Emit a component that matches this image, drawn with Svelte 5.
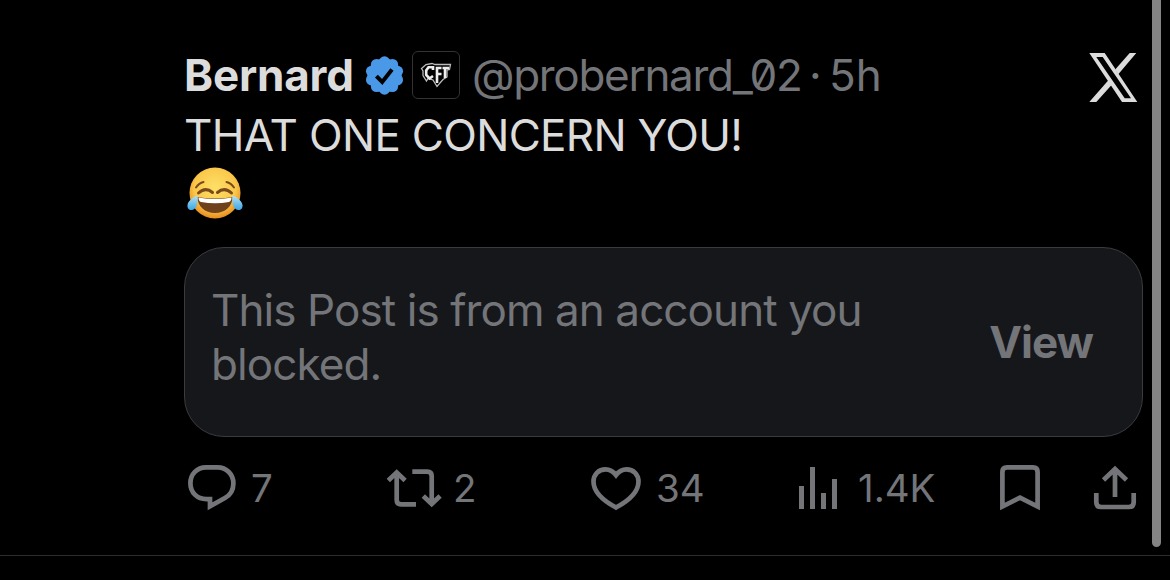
<script lang="ts">
	const post = {
		name: 'Bernard',
		handle: '@probernard_02',
		age: '5h',
		text: 'THAT ONE CONCERN YOU!'
	};

	const notice = ['This Post is from an account you', 'blocked.'];
	const counts = { replies: '7', reposts: '2', likes: '34', views: '1.4K' };

	const bars = [
		{ x: 0, y: 19 },
		{ x: 11, y: 0 },
		{ x: 22, y: 26 },
		{ x: 33, y: 12 }
	];

	// the verified seal is a disc with ten lobes round its rim
	const lobes = Array.from({ length: 10 }, (_, i) => {
		const angle = ((i * 36 - 90) * Math.PI) / 180;
		return { x: 19.5 + 13.6 * Math.cos(angle), y: 19.5 + 13.6 * Math.sin(angle) };
	});
</script>

<main>
	<article>
		<header>
			<span class="name">{post.name}</span>
			<svg class="verified" viewBox="0 0 39 39" aria-label="Verified">
				<circle cx="19.5" cy="19.5" r="17" />
				{#each lobes as lobe}
					<circle cx={lobe.x} cy={lobe.y} r="5.6" />
				{/each}
				<path d="M11.4 20.2l5.8 5.8 9.8-12.6" />
			</svg>
			<span class="affiliate">
				<svg viewBox="0 0 32 26" aria-label="CFT">
					<path
						class="crest"
						d="M1.5 6.5L6 2.5 12 1.5l3 1H30.5l-1 5-2.5.5v7l-4 2.5-6 7-4-6.5-5-1.5-1.5 2.500L3 13.500V9z"
					/>
					<path class="letters" d="M13 8V5.300L8.500 5.200 6.200 8.500v4.500l3.300 3.500 3.500-2.500M17 21V6h4.500M17 12h4.500M22.500 6h6.500M25 6v10" />
				</svg>
			</span>
			<span class="handle">{post.handle}</span>
			<span class="dot">·</span>
			<span class="age">{post.age}</span>
			<svg class="logo" viewBox="0 0 49 49" aria-label="X">
				<path
					fill-rule="evenodd"
					d="M.3 0H15.700L48.300 49H33zM7.300 4L35.700 45.200H42L13.700 4z"
				/>
				<path d="M40.700 0H47.300L29.300 21.200 26.200 16.600zM.3 49H7.300L22.800 31.800 19.600 27z" />
			</svg>
		</header>

		<p class="text">{post.text}</p>

		<svg class="joy" viewBox="0 0 56 52" aria-label="Face with tears of joy">
			<defs>
				<radialGradient id="skin" cx="0.5" cy="0.4" r="0.62">
					<stop offset="0" stop-color="#fde068" />
					<stop offset="0.65" stop-color="#fac84a" />
					<stop offset="1" stop-color="#e5861c" />
				</radialGradient>
				<linearGradient id="tear" x1="0" y1="0" x2="0" y2="1">
					<stop offset="0" stop-color="#b5e2f2" />
					<stop offset="1" stop-color="#3ba6e6" />
				</linearGradient>
			</defs>
			<circle cx="28" cy="26" r="25.5" fill="url(#skin)" />
			<path class="brow" d="M9 20.500q3-4.500 7.500-5.500M47 20.500q-3-4.500-7.500-5.500" />
			<path class="eye" d="M11.500 26q7-6.500 14-.5M44.500 26q-7-6.500-14-.5" />
			<path d="M10.500 30q17.500 3 35 0c0 9.500-7.500 16-17.500 16S10.500 39.500 10.500 30z" fill="#6f421c" />
			<path d="M11.500 30.500q16.500 3 33 0c0 2.500-1 4-2.500 4.500q-14 2.500-28 0C12.500 34.500 11.500 33 11.500 30.500z" fill="#fff" />
			<path d="M10.500 28.500C6 30 1 34 .5 38c-.5 3.500 2 5.500 4.500 5 5-1 6-7 5.500-14.500z" fill="url(#tear)" />
			<path d="M45.500 28.500C50 30 55 34 55.500 38c.5 3.500-2 5.500-4.500 5-5-1-6-7-5.500-14.500z" fill="url(#tear)" />
		</svg>

		<section class="quote">
			<p>
				{#each notice as line}
					<span>{line}</span>
				{/each}
			</p>
			<button>View</button>
		</section>

		<footer>
			<div class="action">
				<svg width="48" height="46" viewBox="0 0 48 46">
					<path
						d="M22 41.300V34.200H18.500C9 34.200 2.400 27.500 2.400 18.300S9 2.400 18 2.400h11.500c9 0 15.900 7 15.900 16 0 6.300-3 11.500-8.500 14.600z"
					/>
				</svg>
				<span class="replies">{counts.replies}</span>
			</div>
			<div class="action">
				<svg width="56" height="46" viewBox="0 0 56 46">
					<path d="M2.300 15.500l8.400-8 8.400 8M10.700 8v27q0 4.400 4.400 4.400H30" />
					<path d="M26.300 6.600H41.300q4.400 0 4.400 4.400V38.500M37.300 31l8.400 8 8.400-8" />
				</svg>
				<span class="reposts">{counts.reposts}</span>
			</div>
			<div class="action">
				<svg width="50" height="46" viewBox="0 0 50 46">
					<path
						d="M25 10C22 6 18.500 4.300 14.500 4.300 7.500 4.300 2.500 9.500 2.500 16.500 2.500 26 10 34.500 25 42.500 40 34.500 47.500 26 47.500 16.500 47.500 9.500 42.500 4.300 35.500 4.300 31.500 4.300 28 6 25 10z"
					/>
				</svg>
				<span class="likes">{counts.likes}</span>
			</div>
			<div class="action">
				<svg class="views-icon" width="38" height="46" viewBox="0 0 38 46">
					{#each bars as bar}
						<rect x={bar.x} y={bar.y + 2} width="5" height={42 - bar.y} />
					{/each}
				</svg>
				<span class="views">{counts.views}</span>
			</div>
			<div class="action">
				<svg width="40" height="46" viewBox="0 0 40 46">
					<path d="M2.400 41.500V7q0-4.600 4.600-4.600H33q4.600 0 4.600 4.600V41.500L20 32.700z" />
				</svg>
			</div>
			<div class="action">
				<svg width="44" height="46" viewBox="0 0 44 46">
					<path d="M3.300 28v9.200q0 4.800 4.800 4.800h27.800q4.800 0 4.800-4.800V28" />
					<path d="M10.500 15l11.500-11 11.500 11M22 4.500V32" />
				</svg>
			</div>
		</footer>
	</article>
	<div class="scrollbar"></div>
</main>

<style>
	:global(body) {
		background: #000;
	}

	main {
		position: relative;
		box-sizing: border-box;
		width: 1170px;
		height: 580px;
		overflow: hidden;
		background: #000;
		font-family: Inter, 'Liberation Sans', sans-serif;
		font-size: 44px;
		color: #737579;
	}

	article {
		box-sizing: border-box;
		height: 556px;
		padding: 47px 27px 0 184px;
		border-bottom: 1px solid #2c2d2f;
	}

	header {
		display: flex;
		align-items: center;
		height: 56px;
		line-height: 56px;
		white-space: nowrap;
	}

	.name {
		width: 181px;
		font-weight: 700;
		letter-spacing: -0.2px;
		color: #dcdcdc;
	}

	.verified {
		width: 39px;
		height: 39px;
		fill: #4a99e9;
	}

	.verified path {
		fill: none;
		stroke: #000;
		stroke-width: 4;
	}

	.affiliate {
		display: flex;
		align-items: center;
		justify-content: center;
		box-sizing: border-box;
		width: 48px;
		height: 48px;
		margin: 0 12px 0 8px;
		border: 1px solid #333;
		border-radius: 6px;
	}

	.affiliate svg {
		width: 32px;
		height: 26px;
		fill: none;
	}

	.crest {
		stroke: #bbb;
		stroke-width: 1.3;
	}

	.letters {
		stroke: #eee;
		stroke-width: 2.6;
	}

	.handle {
		width: 337px;
		font-feature-settings: 'zero';
		letter-spacing: -1.3px;
	}

	.dot {
		width: 20px;
	}

	.logo {
		width: 49px;
		height: 49px;
		margin: 5px 5px 0 auto;
		fill: #dcdcdc;
	}

	.text {
		height: 60px;
		margin: 1px 0 0;
		line-height: 62px;
		letter-spacing: -0.7px;
		color: #dcdcdc;
	}

	.joy {
		display: block;
		width: 56px;
		height: 52px;
		margin: 3px 0 28px 3px;
	}

	.brow,
	.eye {
		fill: none;
		stroke: #7b4a1c;
		stroke-width: 2;
		stroke-linecap: round;
	}

	.eye {
		stroke-width: 3;
	}

	.quote {
		display: flex;
		justify-content: space-between;
		align-items: center;
		box-sizing: border-box;
		height: 190px;
		padding: 0 49px 0 26px;
		border: 1px solid #3a3b3e;
		border-radius: 40px;
		background: #16171b;
	}

	.quote p {
		margin: 0 0 11px;
		line-height: 54px;
	}

	.quote span {
		display: block;
		letter-spacing: -0.92px;
		white-space: nowrap;
	}

	button {
		padding: 0;
		border: 0;
		background: none;
		font: inherit;
		font-weight: 700;
		letter-spacing: -1px;
		color: inherit;
	}

	footer {
		display: grid;
		grid-template-columns: 198px 205px 207px 202px 93px 44px;
		height: 46px;
		margin: 28px 0 0 4px;
		font-size: 38.5px;
		line-height: 46px;
	}

	.action {
		display: flex;
		align-items: center;
		white-space: nowrap;
	}

	.action svg {
		flex: none;
		fill: none;
		stroke: #737579;
		stroke-width: 4.7;
	}

	.action .views-icon {
		fill: #737579;
		stroke: none;
		margin-left: 1px;
	}

	.replies,
	.likes {
		margin-left: 15px;
	}

	.reposts {
		margin-left: 11px;
	}

	.views {
		margin-left: 21px;
	}

	.scrollbar {
		position: absolute;
		top: -10px;
		right: 9px;
		width: 9px;
		height: 557px;
		border-radius: 5px;
		background: #848484;
	}
</style>
